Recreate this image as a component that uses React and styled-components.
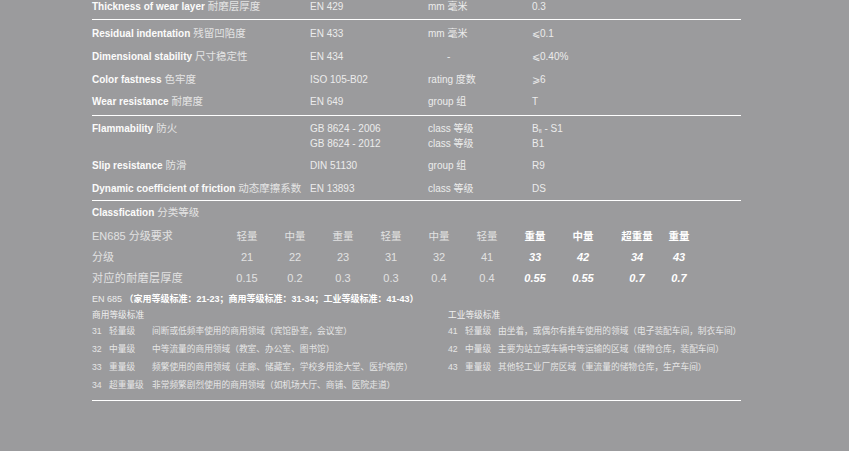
import React from "react";
import styled, { createGlobalStyle } from "styled-components";

const Global = createGlobalStyle`
  html, body { margin: 0; padding: 0; }
  body {
    background: #9b9b9d;
    font-family: "Liberation Sans", "Noto Sans CJK SC", sans-serif;
    color: #ececec;
    width: 849px;
    height: 451px;
    overflow: hidden;
  }
`;

const Page = styled.div`
  padding-left: 92px;
  padding-top: 1px;
  width: 649px;
`;

const Section = styled.div`
  padding: ${(p) => p.$pad || "0"};
  border-bottom: ${(p) => (p.$line ? "1.5px solid #ffffff" : "none")};
`;

const SpecRow = styled.div`
  display: grid;
  grid-template-columns: 218px 118px 104px 1fr;
  font-size: 10px;
  line-height: ${(p) => p.$lh || 15}px;
  margin-top: ${(p) => p.$mt || 0}px;
`;

const Label = styled.div`
  white-space: nowrap;
  b {
    font-weight: 700;
    color: #fbfbfb;
  }
`;

const Cn = styled.span`
  font-family: "Noto Sans CJK SC", sans-serif;
  font-size: 10.5px;
  line-height: 1;
  color: #e4e4e4;
  margin-left: 3px;
`;

const Cell = styled.div`
  color: #ececec;
  white-space: nowrap;
  padding-left: ${(p) => (p.$dash ? "19px" : "0")};
  sub {
    font-size: 6px;
    line-height: 0;
    vertical-align: -1px;
  }
`;

const Title = styled.div`
  font-size: 10px;
  line-height: 14px;
  b {
    font-weight: 700;
    color: #fbfbfb;
  }
`;

const Table = styled.div`
  margin-top: 5.5px;
`;

const TableRow = styled.div`
  display: grid;
  grid-template-columns: 131px repeat(8, 48px) 60px 24px;
  line-height: 21px;
  font-size: 11px;
  color: #e2e2e2;
`;

const TLabel = styled.div`
  white-space: nowrap;
  letter-spacing: ${(p) => p.$ls || 0}px;
`;

const TCell = styled.div`
  text-align: center;
  white-space: nowrap;
  font-size: ${(p) => (p.$head ? "10.5px" : "11px")};
  font-weight: ${(p) => (p.$strong ? 700 : 400)};
  font-style: ${(p) => (p.$strong && !p.$head ? "italic" : "normal")};
  color: ${(p) => (p.$strong ? "#ffffff" : "#e2e2e2")};
`;

const Note = styled.div`
  font-size: 9px;
  line-height: 12px;
  color: #ededed;
  margin-top: 4px;
  white-space: nowrap;
  b {
    font-weight: 700;
    color: #ffffff;
  }
`;

const Lists = styled.div`
  display: grid;
  grid-template-columns: 356px 1fr;
  margin-top: 3px;
`;

const ListHead = styled.div`
  font-size: 8.7px;
  line-height: 14px;
  color: #f0f0f0;
`;

const Item = styled.div`
  display: grid;
  grid-template-columns: 17px ${(p) => p.$cat || 43}px 1fr;
  font-size: 8.7px;
  line-height: 18px;
  color: #e6e6e6;
  white-space: nowrap;
`;

const specs1 = [
  ["Residual indentation", "残留凹陷度", "EN 433", "mm 毫米", "⩽0.1"],
  ["Dimensional stability", "尺寸稳定性", "EN 434", "-", "⩽0.40%"],
  ["Color fastness", "色牢度", "ISO 105-B02", "rating 度数", "⩾6"],
  ["Wear resistance", "耐磨度", "EN 649", "group 组", "T"],
];

const heads = [
  ["轻量", 0], ["中量", 0], ["重量", 0], ["轻量", 0], ["中量", 0], ["轻量", 0],
  ["重量", 1], ["中量", 1], ["超重量", 1], ["重量", 1],
];
const codes = ["21", "22", "23", "31", "32", "41", "33", "42", "34", "43"];
const thick = ["0.15", "0.2", "0.3", "0.3", "0.4", "0.4", "0.55", "0.55", "0.7", "0.7"];

const left = [
  ["31", "轻量级", "间断或低频率使用的商用领域（宾馆卧室，会议室）"],
  ["32", "中量级", "中等流量的商用领域（教室、办公室、图书馆）"],
  ["33", "重量级", "频繁使用的商用领域（走廊、储藏室，学校多用途大堂、医护病房）"],
  ["34", "超重量级", "非常频繁剧烈使用的商用领域（如机场大厅、商铺、医院走道）"],
];
const right = [
  ["41", "轻量级", "由坐着，或偶尔有推车使用的领域（电子装配车间，制衣车间）"],
  ["42", "中量级", "主要为站立或车辆中等运输的区域（储物仓库，装配车间）"],
  ["43", "重量级", "其他轻工业厂房区域（重流量的储物仓库，生产车间）"],
];

export default function App() {
  return (
    <>
      <Global />
      <Page>
        <Section $line $pad="0 0 6px 0">
          <SpecRow $lh={12}>
            <Label>
              <b>Thickness of wear layer</b>
              <Cn>耐磨层厚度</Cn>
            </Label>
            <Cell>EN 429</Cell>
            <Cell>mm 毫米</Cell>
            <Cell>0.3</Cell>
          </SpecRow>
        </Section>

        <Section $line $pad="3px 0 0.5px 0">
          {specs1.map((r) => (
            <SpecRow key={r[0]} $lh={22.8}>
              <Label>
                <b>{r[0]}</b>
                <Cn>{r[1]}</Cn>
              </Label>
              <Cell>{r[2]}</Cell>
              <Cell $dash={r[3] === "-"}>{r[3]}</Cell>
              <Cell>{r[4]}</Cell>
            </SpecRow>
          ))}
        </Section>

        <Section $line $pad="5.5px 0 4px 0">
          <SpecRow $lh={15}>
            <Label>
              <b>Flammability</b>
              <Cn>防火</Cn>
            </Label>
            <Cell>
              GB 8624 - 2006
              <br />
              GB 8624 - 2012
            </Cell>
            <Cell>
              class 等级
              <br />
              class 等级
            </Cell>
            <Cell>
              B<sub>fl</sub> - S1
              <br />
              B1
            </Cell>
          </SpecRow>
          <SpecRow $lh={15} $mt={6.5}>
            <Label>
              <b>Slip resistance</b>
              <Cn>防滑</Cn>
            </Label>
            <Cell>DIN 51130</Cell>
            <Cell>group 组</Cell>
            <Cell>R9</Cell>
          </SpecRow>
          <SpecRow $lh={15} $mt={8}>
            <Label>
              <b>Dynamic coefficient of friction</b>
              <Cn>动态摩擦系数</Cn>
            </Label>
            <Cell>EN 13893</Cell>
            <Cell>class 等级</Cell>
            <Cell>DS</Cell>
          </SpecRow>
        </Section>

        <Section $line $pad="5.5px 0 6px 0">
          <Title>
            <b>Classfication</b>
            <Cn>分类等级</Cn>
          </Title>
          <Table>
            <TableRow>
              <TLabel>EN685 分级要求</TLabel>
              {heads.map(([t, s], i) => (
                <TCell key={i} $head $strong={!!s}>
                  {t}
                </TCell>
              ))}
            </TableRow>
            <TableRow>
              <TLabel>分级</TLabel>
              {codes.map((t, i) => (
                <TCell key={i} $strong={i >= 6}>
                  {t}
                </TCell>
              ))}
            </TableRow>
            <TableRow>
              <TLabel $ls={0.4}>对应的耐磨层厚度</TLabel>
              {thick.map((t, i) => (
                <TCell key={i} $strong={i >= 6}>
                  {t}
                </TCell>
              ))}
            </TableRow>
          </Table>
          <Note>
            EN 685 <b>（家用等级标准：21-23；商用等级标准：31-34；工业等级标准：41-43）</b>
          </Note>
          <Lists>
            <div>
              <ListHead>商用等级标准</ListHead>
              {left.map((r) => (
                <Item key={r[0]} $cat={43}>
                  <span>{r[0]}</span>
                  <span>{r[1]}</span>
                  <span>{r[2]}</span>
                </Item>
              ))}
            </div>
            <div>
              <ListHead>工业等级标准</ListHead>
              {right.map((r) => (
                <Item key={r[0]} $cat={33}>
                  <span>{r[0]}</span>
                  <span>{r[1]}</span>
                  <span>{r[2]}</span>
                </Item>
              ))}
            </div>
          </Lists>
        </Section>
      </Page>
    </>
  );
}
